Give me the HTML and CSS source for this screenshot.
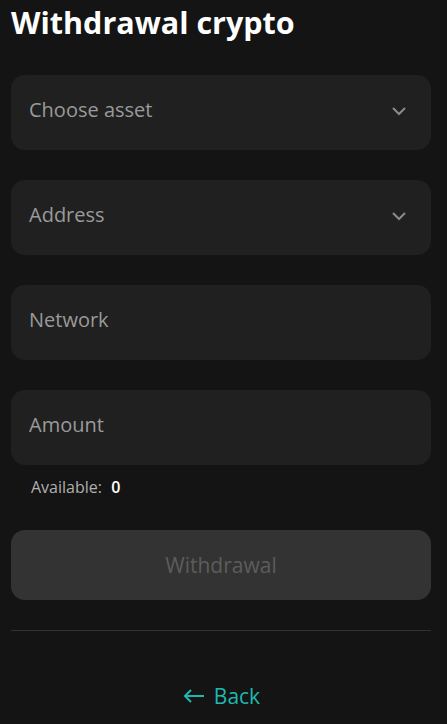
FILE: index.html
```html
<!DOCTYPE html>
<html lang="en">
<head>
    <meta charset="UTF-8">
    <meta name="viewport" content="width=device-width, initial-scale=1.0">
    <title>Withdrawal crypto</title>
    <link rel="stylesheet" href="styles.css">
</head>
<body>
    <div class="container">
        <h1>Withdrawal crypto</h1>

        <form class="withdraw-form" onsubmit="return false;">
            <div class="field select">
                <span class="placeholder">Choose asset</span>
                <svg class="chevron" width="16" height="10" viewBox="0 0 16 10"><path d="M2 2l6 6 6-6" fill="none" stroke="currentColor" stroke-width="2"/></svg>
            </div>
            <div class="field select">
                <span class="placeholder">Address</span>
                <svg class="chevron" width="16" height="10" viewBox="0 0 16 10"><path d="M2 2l6 6 6-6" fill="none" stroke="currentColor" stroke-width="2"/></svg>
            </div>
            <div class="field">
                <input type="text" placeholder="Network">
            </div>
            <div class="field">
                <input type="text" placeholder="Amount">
            </div>
            <div class="available">Available: <strong>0</strong></div>

            <button type="button" class="submit" disabled>Withdrawal</button>
        </form>

        <hr class="divider">

        <a class="back" href="#">
            <svg width="24" height="16" viewBox="0 0 24 16"><path d="M22 8H3M9 2L3 8l6 6" fill="none" stroke="currentColor" stroke-width="2"/></svg>
            Back
        </a>
    </div>
</body>
</html>
```

FILE: styles.css
```css
body {
    margin: 0;
    background: #141414;
    font-family: "Open Sans", "Noto Sans", sans-serif;
    color: #fff;
}

.container {
    padding: 0 16px 0 11px;
}

h1 {
    margin: 0;
    padding-top: 2px;
    font-size: 30.5px;
    line-height: 40px;
    font-weight: 700;
}

.withdraw-form {
    display: flex;
    flex-direction: column;
    gap: 30px;
    margin-top: 33px;
}

.field {
    height: 75px;
    display: flex;
    align-items: center;
    justify-content: space-between;
    padding: 0 24px 0 18px;
    background: #202020;
    border-radius: 14px;
    box-sizing: border-box;
}

.placeholder,
.field input {
    font-family: inherit;
    font-size: 20px;
    color: #9a9a9a;
    margin-top: -6px;
}

.field input {
    width: 100%;
    border: none;
    outline: none;
    background: transparent;
    padding: 0;
    color: #fff;
}

.field input::placeholder {
    color: #9a9a9a;
}

.chevron {
    color: #8a8a8a;
    margin-top: -3px;
}

.available {
    margin: -19px 0 0 20px;
    font-size: 16px;
    color: #b0b0b0;
}

.available strong {
    margin-left: 5px;
    color: #fff;
    font-weight: 600;
    font-size: 16px;
}

.submit {
    height: 70px;
    margin-top: 2px;
    border: none;
    border-radius: 14px;
    background: #333;
    color: #5c5c5c;
    font-family: inherit;
    font-size: 21px;
}

.divider {
    margin: 30px 0 0;
    border: none;
    border-top: 1px solid #333;
}

.back {
    display: flex;
    align-items: center;
    justify-content: center;
    gap: 8px;
    margin-top: 51px;
    color: #1fb8b0;
    font-size: 21px;
    text-decoration: none;
}
```
